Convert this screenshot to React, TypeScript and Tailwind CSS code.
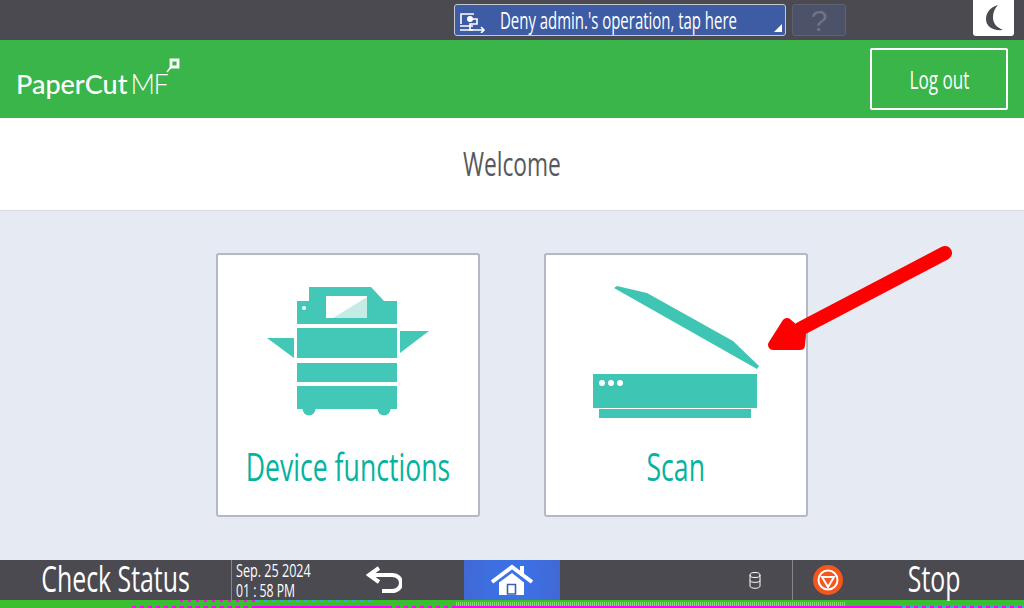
import type { ReactNode } from "react";

const font = { fontFamily: '"Open Sans", sans-serif' };

// the device text is a condensed face, so squeeze Open Sans sideways
function Narrow({ className, children }: { className: string; children: ReactNode }) {
  return (
    <span className={`inline-block shrink-0 whitespace-nowrap ${className}`} style={font}>
      {children}
    </span>
  );
}

function CopierIcon() {
  return (
    <svg className="mt-px shrink-0" width="162" height="129" viewBox="0 0 162 129" fill="#43c7b6">
      <path d="M42 0H104L117 14H130V37H30V14H42Z" />
      <path d="M59 9H100V31H59Z" fill="#fff" />
      <path d="M100 10V31H66Z" fill="#c5ebe5" />
      <circle cx="37" cy="21" r="2" fill="#fff" />
      <path d="M30 41H130V71H30ZM30 76H130V95H30ZM30 99H130V122H30Z" />
      <circle cx="42" cy="122" r="6.500" />
      <circle cx="117" cy="122" r="6.500" />
      <path d="M0 51H27V71ZM133 44H162L133 66Z" />
    </svg>
  );
}

function ScannerIcon() {
  return (
    <svg className="shrink-0" width="166" height="132" viewBox="0 0 166 132" fill="#3fc5b4">
      <path d="M21 2L24 0L54 7L140 55L166 80L164 83Z" />
      <path d="M0 88H164V122H0ZM6 123H158V132H6Z" />
      <circle cx="9" cy="97" r="3" fill="#fff" />
      <circle cx="18" cy="97" r="3" fill="#fff" />
      <circle cx="27" cy="97" r="3" fill="#fff" />
    </svg>
  );
}

function Tile({ label, icon }: { label: string; icon: ReactNode }) {
  return (
    <button type="button" className="flex h-[264px] w-[264px] flex-col items-center rounded-[3px] border-2 border-[#b5b7c4] bg-white">
      <div className="mt-[31px] flex h-[132px] items-start justify-center">{icon}</div>
      <Narrow className="mt-[26px] scale-x-[0.7] text-[38px] leading-[44px] text-[#05b3a0]">{label}</Narrow>
    </button>
  );
}

export default function App() {
  return (
    <div className="relative flex h-[608px] w-[1024px] flex-col overflow-hidden bg-[#e6eaf2]" style={font}>
      <header className="flex h-10 items-center bg-[#4a4a50] pl-[454px]">
        <div className="relative flex h-8 w-[332px] items-center rounded-[3px] border border-[#c5c8d4] bg-[#3d5ca3] pl-[5px]">
          <svg className="mt-[6px] shrink-0" width="26" height="20" viewBox="0 0 26 20" fill="none" stroke="#fff" strokeWidth="1.600">
            <path d="M1 11V1H14" />
            <path d="M0 13H13M0 17H13" />
            <circle cx="10" cy="6" r="2.200" fill="#fff" />
            <path d="M12 6H17V11H10V17H24M21 14L24 17L21 20" />
          </svg>
          <Narrow className="ml-[14px] origin-left scale-x-[0.65] text-[23px] leading-8 text-white">Deny admin.'s operation, tap here</Narrow>
          <div className="absolute bottom-[3px] right-[3px] h-0 w-0 border-b-[8px] border-l-[8px] border-b-white border-l-transparent" />
        </div>
        <div className="ml-[6px] flex h-8 w-[54px] items-center justify-center rounded-[3px] border border-[#5d6272] bg-[#4b5269] text-[30px] text-[#6f7484]" style={{ fontFamily: '"Liberation Sans", sans-serif' }}>
          ?
        </div>
        <div className="ml-auto mr-[10px] flex h-9 w-[41px] -translate-y-0.5 items-center justify-center rounded-b-[3px] bg-white">
          <svg width="20" height="28" viewBox="0 0 20 28" fill="#4a4a50">
            <path d="M14 1C6 3 2 9 2 15C2 22 8 27 19 26C12 23 9 19 9 13C9 8 11 4 14 1Z" />
          </svg>
        </div>
      </header>

      <div className="flex h-[78px] items-center justify-between bg-[#39b54a] px-4">
        <div className="relative flex items-baseline pt-[10px] text-[27px] leading-8 text-white" style={{ fontFamily: '"Lato", sans-serif' }}>
          <span className="font-medium">PaperCut</span>
          <span className="ml-[3px] font-light tracking-[-1.5px]">MF</span>
          <svg className="absolute -right-[13px] top-0" width="14" height="15" viewBox="0 0 14 15" fill="none" stroke="#fff" strokeWidth="2.800">
            <path d="M5 2H12V9H5Z" />
            <path d="M5 9L1 14" strokeWidth="1.600" />
          </svg>
        </div>
        <button type="button" className="flex h-[62px] w-[138px] items-center justify-center rounded-[2px] border-2 border-white">
          <Narrow className="scale-x-[0.66] text-[26px] font-medium text-white">Log out</Narrow>
        </button>
      </div>

      <div className="flex h-[93px] items-center justify-center border-b border-[#d9dae0] bg-white">
        <Narrow className="scale-x-[0.71] text-[32px] text-[#58585c]">Welcome</Narrow>
      </div>

      <main className="flex h-[349px] justify-center gap-[64px] pt-[42px]">
        <Tile label="Device functions" icon={<CopierIcon />} />
        <Tile label="Scan" icon={<ScannerIcon />} />
      </main>

      <footer className="flex h-10 items-center bg-[#4a4a50] text-white">
        <div className="flex h-full w-[232px] items-center justify-center border-r border-[#85858a]">
          <Narrow className="-translate-y-px scale-x-[0.69] text-[36px] leading-10">Check Status</Narrow>
        </div>
        <div className="flex w-[232px] items-center">
          <div className="ml-1 flex w-[100px] shrink-0 flex-col text-[18px] leading-[20px]">
            <Narrow className="origin-left scale-x-[0.7]">Sep. 25 2024</Narrow>
            <Narrow className="origin-left scale-x-[0.68]">01 : 58 PM</Narrow>
          </div>
          <svg className="ml-[30px] shrink-0" width="36" height="28" viewBox="0 0 36 28" fill="none" stroke="#fff" strokeWidth="4">
            <path d="M13 2L3 9L13 16" />
            <path d="M3 9H26C38 9 38 25 26 25H16" />
          </svg>
        </div>
        <div className="flex h-full w-24 items-center justify-center bg-[radial-gradient(circle,#3a74ee,#4268d2)]">
          <svg width="44" height="32" viewBox="0 0 44 32" fill="none">
            <path d="M2 18L22 3L42 18" stroke="#fff" strokeWidth="4" />
            <path d="M30 2H34V12H30Z" fill="#fff" />
            <path d="M9 18.500L22 9L34 18.500V31H9Z" fill="#fff" />
            <path d="M17.500 20.500H25.500V30H17.500Z" fill="#fff" stroke="#3a5fb8" strokeWidth="1.600" />
          </svg>
        </div>
        <div className="flex h-full w-[233px] items-center justify-end border-r border-[#85858a] pr-[31px]">
          <svg width="12" height="17" viewBox="0 0 12 17" fill="none" stroke="#fff" strokeWidth="1">
            <ellipse cx="6" cy="3" rx="5" ry="2.500" />
            <path d="M1 3V14C1 17 11 17 11 14V3M1 8.500C1 11 11 11 11 8.500" />
          </svg>
        </div>
        <div className="flex flex-1 items-center">
          <div className="ml-[20px] flex h-[30px] w-[30px] items-center justify-center rounded-full bg-[#f4561d]">
            <svg width="22" height="22" viewBox="0 0 22 22" fill="none" stroke="#fff" strokeWidth="2">
              <circle cx="11" cy="11" r="9.500" />
              <path d="M5 8H17L11 18Z" />
            </svg>
          </div>
          <Narrow className="ml-[53px] -translate-y-px scale-x-[0.69] text-[36px] leading-10">Stop</Narrow>
        </div>
      </footer>

      {/* glitched pixel rows under the panel */}
      <div className="flex h-2 flex-col bg-[#3abf2e]">
        <div className="flex h-[2px]">
          <div className="w-[180px]" />
          <div className="w-[76px] bg-[repeating-linear-gradient(90deg,#e81fd8_0_3px,#3abf2e_3px_8px)]" />
          <div className="w-[120px] bg-[repeating-linear-gradient(90deg,#3aa8d8_0_3px,#3abf2e_3px_8px)]" />
        </div>
        <div className="flex h-1">
          <div className="w-[456px]" />
          <div className="w-[390px] bg-[repeating-linear-gradient(90deg,#7ce068_0_1px,#3abf2e_1px_2px)]" />
        </div>
        <div className="flex h-[2px]">
          <div className="w-[132px]" />
          <div className="w-[120px] bg-[repeating-linear-gradient(90deg,#ff00ff_0_4px,#3abf2e_4px_8px)]" />
          <div className="w-[136px] bg-[#ff00ff]" />
          <div className="w-[68px] bg-[repeating-linear-gradient(90deg,#ff00ff_0_4px,#3abf2e_4px_8px)]" />
          <div className="w-[442px] bg-[#ff00ff]" />
          <div className="w-[126px] bg-[repeating-linear-gradient(90deg,#ff00ff_0_4px,#3aa8d8_4px_8px)]" />
        </div>
      </div>

      {/* red annotation arrow drawn over the screenshot */}
      <svg className="absolute left-[760px] top-[240px]" width="200" height="120" viewBox="0 0 200 120" fill="#ff0000" stroke="#ff0000" strokeLinejoin="round">
        <path d="M185 13L40 89" strokeWidth="14" strokeLinecap="round" fill="none" />
        <path d="M27 83L13 105H40L41 95Z" strokeWidth="10" />
      </svg>
    </div>
  );
}
